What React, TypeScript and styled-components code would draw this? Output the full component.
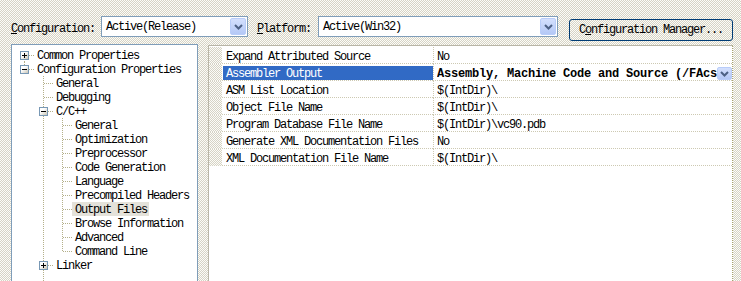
import React from 'react'
import styled, { createGlobalStyle, css } from 'styled-components'

type TreeNode = {
  label: string
  open?: boolean
  kids?: TreeNode[]
  selected?: boolean
  ghost?: boolean
}

type FlatNode = {
  node: TreeNode
  rails: boolean[]
  last: boolean
  firstRoot: boolean
}

type PropRow = {
  name: string
  value: string
  selected?: boolean
}

const tree: TreeNode[] = [
  { label: 'Common Properties', kids: [] },
  {
    label: 'Configuration Properties',
    open: true,
    kids: [
      { label: 'General' },
      { label: 'Debugging' },
      {
        label: 'C/C++',
        open: true,
        kids: [
          { label: 'General' },
          { label: 'Optimization' },
          { label: 'Preprocessor' },
          { label: 'Code Generation' },
          { label: 'Language' },
          { label: 'Precompiled Headers' },
          { label: 'Output Files', selected: true },
          { label: 'Browse Information' },
          { label: 'Advanced' },
          { label: 'Command Line' },
        ],
      },
      { label: 'Linker', kids: [] },
      { label: '', ghost: true },
    ],
  },
]

const rows: PropRow[] = [
  { name: 'Expand Attributed Source', value: 'No' },
  { name: 'Assembler Output', value: 'Assembly, Machine Code and Source (/FAcs)', selected: true },
  { name: 'ASM List Location', value: '$(IntDir)\\' },
  { name: 'Object File Name', value: '$(IntDir)\\' },
  { name: 'Program Database File Name', value: '$(IntDir)\\vc90.pdb' },
  { name: 'Generate XML Documentation Files', value: 'No' },
  { name: 'XML Documentation File Name', value: '$(IntDir)\\' },
]

// flatten the visible part of the tree, keeping which ancestor rails continue
function flatten(nodes: TreeNode[], rails: boolean[], out: FlatNode[]) {
  nodes.forEach((node, i) => {
    const last = i === nodes.length - 1
    out.push({ node, rails, last, firstRoot: rails.length === 0 && i === 0 })
    if (node.open && node.kids) flatten(node.kids, [...rails, !last], out)
  })
  return out
}

export default function App() {
  const items = flatten(tree, [], [])

  return (
    <>
      <GlobalStyle />
      <Page>
        <Toolbar>
          <FieldLabel $after={6}>
            <u>C</u>onfiguration:
          </FieldLabel>
          <Combo $width={147}>
            <ComboText>Active(Release)</ComboText>
            <ComboButton>
              <Chevron />
            </ComboButton>
          </Combo>
          <FieldLabel $before={9} $after={7}>
            <u>P</u>latform:
          </FieldLabel>
          <Combo $width={240}>
            <ComboText>Active(Win32)</ComboText>
            <ComboButton>
              <Chevron />
            </ComboButton>
          </Combo>
          <PushButton>
            C<u>o</u>nfiguration Manager...
          </PushButton>
        </Toolbar>

        <Main>
          <TreePanel>
            {items.map(({ node, rails, last, firstRoot }, i) => (
              <TreeRow key={i}>
                {rails.map((on, k) => (
                  <Guide key={k} $v={on ? 'full' : 'none'} />
                ))}
                {node.ghost ? (
                  <Guide $v="full" />
                ) : (
                  <Guide $v={firstRoot ? (last ? 'none' : 'bottom') : last ? 'top' : 'full'} $h>
                    {node.kids && <Expander open={!!node.open} />}
                  </Guide>
                )}
                {!node.ghost && <TreeLabel $selected={node.selected}>{node.label}</TreeLabel>}
              </TreeRow>
            ))}
          </TreePanel>

          <Grid>
            {rows.map(row => (
              <GridRow key={row.name}>
                <Gutter />
                <NameCell>
                  <NameText $selected={row.selected}>{row.name}</NameText>
                </NameCell>
                <ValueCell>
                  <ValueText $bold={row.selected}>{row.value}</ValueText>
                  {row.selected && (
                    <MiniDrop>
                      <Chevron />
                    </MiniDrop>
                  )}
                </ValueCell>
              </GridRow>
            ))}
          </Grid>
        </Main>
      </Page>
    </>
  )
}

const Chevron = () => (
  <svg width="9" height="6" viewBox="0 0 9 6">
    <polyline points="1,1 4.5,4.5 8,1" fill="none" stroke="#4d6185" strokeWidth="2" />
  </svg>
)

const Expander = ({ open }: { open: boolean }) => (
  <StyledExpander>
    <svg width="7" height="7" viewBox="0 0 7 7">
      <rect x="1" y="3" width="5" height="1" fill="#000" />
      {!open && <rect x="3" y="1" width="1" height="5" fill="#000" />}
    </svg>
  </StyledExpander>
)

const dither = css`
  background: repeating-conic-gradient(#d6d3c5 0 25%, #fcfcf8 0 50%) 0 0 / 2px 2px;
`

const lineColor = '#b4b08a'
const dotV = `repeating-linear-gradient(to bottom, ${lineColor} 0 1px, transparent 1px 2px)`
const dotH = `repeating-linear-gradient(to right, ${lineColor} 0 1px, transparent 1px 2px)`

const GlobalStyle = createGlobalStyle`
  html, body {
    margin: 0;
    padding: 0;
    overflow: hidden;
  }

  body {
    width: 741px;
    height: 281px;
    ${dither}
    font-family: "Liberation Mono", "DejaVu Sans Mono", monospace;
    font-size: 12px;
    letter-spacing: -1.2px;
    color: #000;
  }
`

const Page = styled.div`
  width: 741px;
  height: 281px;
  padding: 16px 0 0 11px;
  box-sizing: border-box;
  overflow: hidden;
`

const Toolbar = styled.div`
  display: flex;
  align-items: flex-start;
  height: 25px;
`

const FieldLabel = styled.span<{ $before?: number; $after?: number }>`
  flex: none;
  margin-left: ${p => p.$before ?? 0}px;
  margin-right: ${p => p.$after ?? 0}px;
  padding-top: 3px;
  line-height: 21px;
  white-space: nowrap;
`

const Combo = styled.div<{ $width: number }>`
  flex: none;
  display: flex;
  width: ${p => p.$width}px;
  height: 21px;
  box-sizing: border-box;
  border: 1px solid #7f9db9;
  background: #fff;
`

const ComboText = styled.span`
  flex: 1;
  padding: 1px 0 0 4px;
  line-height: 19px;
  white-space: nowrap;
  overflow: hidden;
`

const ComboButton = styled.span`
  flex: none;
  display: flex;
  align-items: center;
  justify-content: center;
  width: 16px;
  margin: 1px;
  box-sizing: border-box;
  border: 1px solid #b9cdf9;
  border-radius: 2px;
  background: linear-gradient(#d4e0fd, #b4c8f6);
`

const PushButton = styled.button`
  flex: none;
  width: 164px;
  height: 22px;
  margin: 3px 0 0 11px;
  padding: 0;
  border: 1px solid #003c74;
  border-radius: 3px;
  ${dither}
  font: inherit;
  letter-spacing: inherit;
  color: #000;
`

const Main = styled.div`
  display: flex;
  align-items: flex-start;
  margin-top: 3px;
`

const TreePanel = styled.div`
  flex: none;
  width: 187px;
  height: 260px;
  box-sizing: border-box;
  padding: 3px 0 0 3px;
  border: 1px solid #7f9db9;
  background: #fff;
`

const TreeRow = styled.div`
  display: flex;
  height: 14px;
`

const Guide = styled.span<{ $v: 'none' | 'full' | 'top' | 'bottom'; $h?: boolean }>`
  flex: none;
  display: flex;
  justify-content: center;
  align-items: flex-start;
  width: 19px;
  height: 14px;
  ${({ $v, $h }) => {
    const layers: string[] = []
    if ($v === 'full') layers.push(`${dotV} 9px 0 / 1px 14px no-repeat`)
    if ($v === 'top') layers.push(`${dotV} 9px 0 / 1px 8px no-repeat`)
    if ($v === 'bottom') layers.push(`${dotV} 9px 7px / 1px 7px no-repeat`)
    if ($h) layers.push(`${dotH} 10px 7px / 9px 1px no-repeat`)
    return layers.length ? `background: ${layers.join(', ')};` : ''
  }}
`

const StyledExpander = styled.span`
  display: flex;
  width: 9px;
  height: 9px;
  margin-top: 3px;
  box-sizing: border-box;
  border: 1px solid #7898b5;
  background: linear-gradient(135deg, #fff 35%, #c9c5b6);
`

const TreeLabel = styled.span<{ $selected?: boolean }>`
  height: 14px;
  padding: 0 2px 0 3px;
  line-height: 17px;
  white-space: nowrap;
  overflow: hidden;
  background: ${p => (p.$selected ? '#e4e2da' : 'transparent')};
`

const Grid = styled.div`
  flex: none;
  width: 525px;
  height: 260px;
  margin: 1px 0 0 10px;
  padding-top: 1px;
  box-sizing: border-box;
  border-top: 1px solid #b8b5a6;
  border-left: 1px solid #b8b5a6;
  border-right: 1px dotted #a8a470;
  background: #fff;
`

const GridRow = styled.div`
  display: flex;
  height: 17px;
`

const Gutter = styled.span`
  flex: none;
  width: 13px;
  ${dither}
`

const cellLine = '1px dotted #cdc9b2'

const NameCell = styled.span`
  flex: none;
  width: 211px;
  box-sizing: border-box;
  padding: 2px 0 0 1px;
  border-bottom: ${cellLine};
`

const NameText = styled.span<{ $selected?: boolean }>`
  display: block;
  height: 14px;
  padding-left: 3px;
  line-height: 16px;
  white-space: nowrap;
  overflow: hidden;
  background: ${p => (p.$selected ? '#316ac5' : 'transparent')};
  color: ${p => (p.$selected ? '#fff' : '#000')};
`

const ValueCell = styled.span`
  flex: 1;
  min-width: 0;
  display: flex;
  align-items: flex-start;
  box-sizing: border-box;
  padding: 2px 0 0 3px;
  border-left: ${cellLine};
  border-bottom: ${cellLine};
`

const ValueText = styled.span<{ $bold?: boolean }>`
  flex: 1 1 auto;
  min-width: 0;
  height: 14px;
  line-height: 16px;
  overflow: hidden;
  white-space: nowrap;
  font-weight: ${p => (p.$bold ? 'bold' : 'normal')};
  letter-spacing: ${p => (p.$bold ? '-0.2px' : '-1.2px')};
`

const MiniDrop = styled.span`
  flex: none;
  display: flex;
  align-items: center;
  justify-content: center;
  width: 15px;
  height: 13px;
  margin-top: 1px;
  box-sizing: border-box;
  border: 1px solid #b9cdf9;
  border-radius: 2px;
  background: linear-gradient(#d4e0fd, #b4c8f6);
`
